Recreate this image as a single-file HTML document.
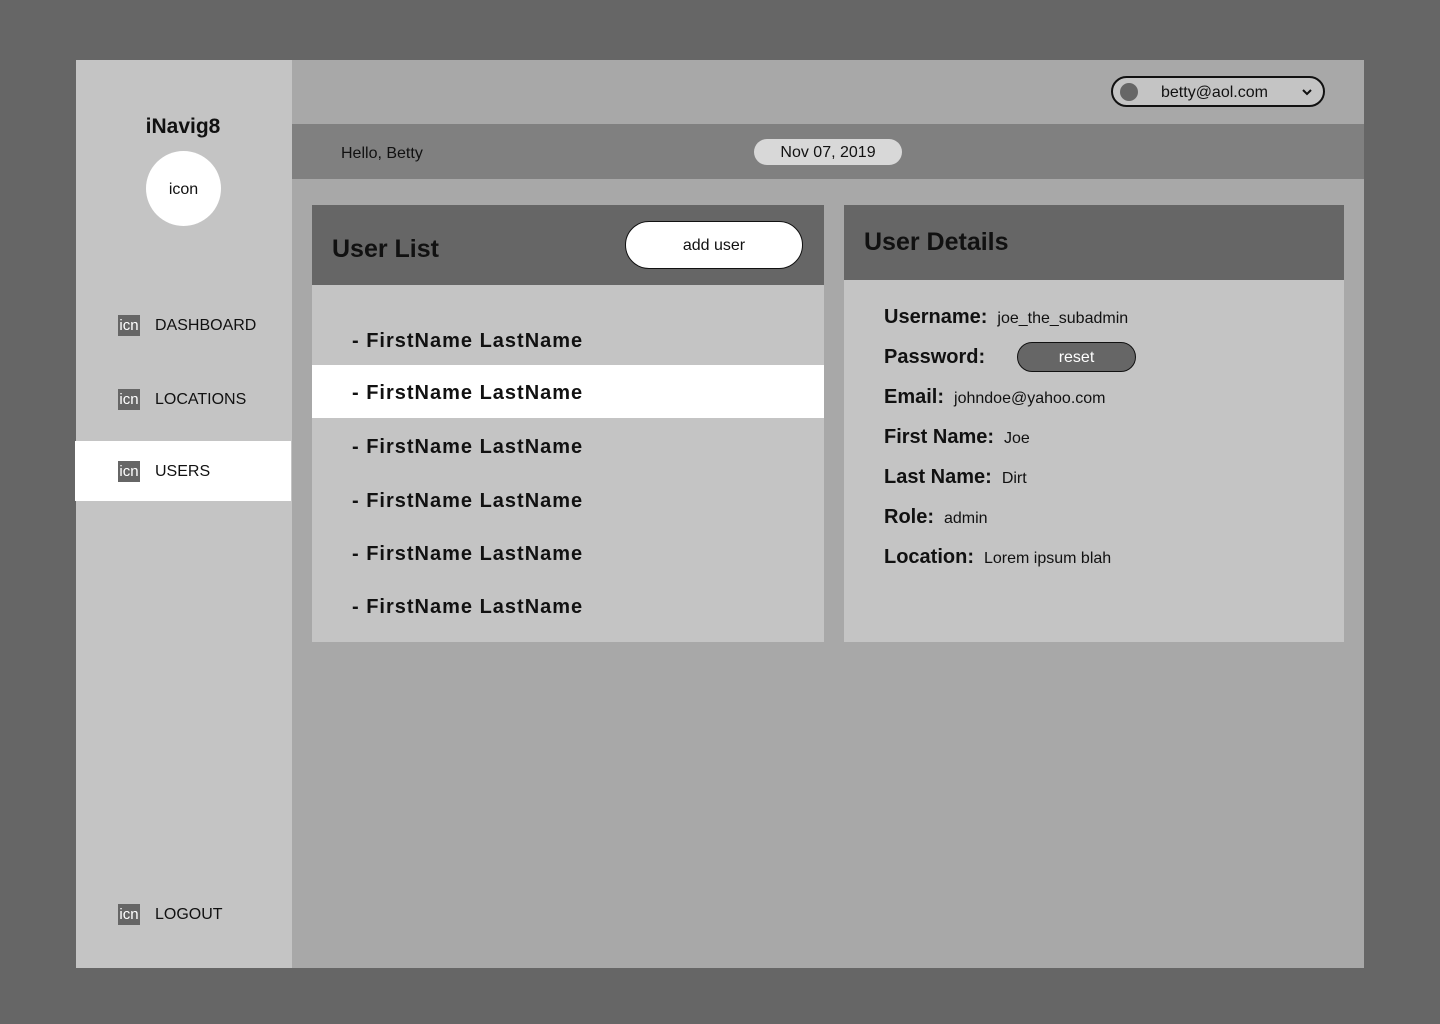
<!DOCTYPE html>
<html><head><meta charset="utf-8"><style>
*{margin:0;padding:0;box-sizing:border-box}
body{width:1440px;height:1024px;background:#666;font-family:"Liberation Sans",sans-serif;position:relative;overflow:hidden;color:#111}
.a{position:absolute}
.side{left:76px;top:60px;width:216px;height:908px;background:#c4c4c4}
.main{left:292px;top:60px;width:1072px;height:908px;background:#a8a8a8}
.b{font-weight:bold}
.nav{position:absolute;left:118px;font-size:16px;display:flex;align-items:center}
.nav .i{background:#666;color:#fff;width:22px;height:21px;font-size:15px;line-height:21px;text-align:center;margin-right:15px}
.row{position:absolute;left:312px;width:512px;height:53px;line-height:53px;padding-left:40px;font-weight:bold;font-size:20px;letter-spacing:1px}
.d{position:absolute;left:884px;font-size:20px;font-weight:bold;display:flex;align-items:baseline}
.d span{font-weight:normal;font-size:16px;margin-left:10px}
</style></head><body>
<div class="a side"></div>
<div class="a main"></div>
<div class="a b" style="left:76px;width:214px;top:115px;text-align:center;font-size:21px">iNavig8</div>
<div class="a" style="left:146px;top:151px;width:75px;height:75px;border-radius:50%;background:#fff;text-align:center;line-height:77px;font-size:16px">icon</div>
<div class="nav" style="top:315px"><div class="i">icn</div>DASHBOARD</div>
<div class="nav" style="top:389px"><div class="i">icn</div>LOCATIONS</div>
<div class="a" style="left:75px;top:441px;width:216px;height:60px;background:#fff"></div>
<div class="nav" style="top:461px"><div class="i">icn</div>USERS</div>
<div class="nav" style="top:904px"><div class="i">icn</div>LOGOUT</div>
<div class="a" style="left:1111px;top:76px;width:214px;height:31px;border:2px solid #111;border-radius:16px;background:#c4c4c4;font-size:16px;line-height:29px;padding-left:48px">betty@aol.com
<div class="a" style="left:7px;top:5px;width:18px;height:18px;border-radius:50%;background:#666"></div>
<svg class="a" style="left:188px;top:10px" width="12" height="8" viewBox="0 0 12 8"><path d="M2 2l4 4 4-4" fill="none" stroke="#111" stroke-width="2"/></svg></div>
<div class="a" style="left:292px;top:124px;width:1072px;height:55px;background:#808080"></div>
<div class="a" style="left:341px;top:145px;font-size:16px">Hello, Betty</div>
<div class="a" style="left:754px;top:139px;width:148px;height:26px;border-radius:13px;background:#d8d8d8;text-align:center;line-height:28px;font-size:16px">Nov 07, 2019</div>
<div class="a" style="left:312px;top:205px;width:512px;height:437px;background:#c4c4c4"></div>
<div class="a" style="left:312px;top:205px;width:512px;height:80px;background:#666"></div>
<div class="a b" style="left:332px;top:235px;font-size:25px">User List</div>
<div class="a" style="left:625px;top:221px;width:178px;height:48px;border:1px solid #111;border-radius:24px;background:#fff;text-align:center;line-height:48px;font-size:16px">add user</div>
<div class="row" style="top:315px">- FirstName LastName</div>
<div class="row" style="top:365px;background:#fff;line-height:56px">- FirstName LastName</div>
<div class="row" style="top:421px">- FirstName LastName</div>
<div class="row" style="top:475px">- FirstName LastName</div>
<div class="row" style="top:528px">- FirstName LastName</div>
<div class="row" style="top:581px">- FirstName LastName</div>
<div class="a" style="left:844px;top:205px;width:500px;height:437px;background:#c4c4c4"></div>
<div class="a" style="left:844px;top:205px;width:500px;height:75px;background:#666"></div>
<div class="a b" style="left:864px;top:228px;font-size:25px">User Details</div>
<div class="d" style="top:306px">Username:<span>joe_the_subadmin</span></div>
<div class="d" style="top:346px">Password:</div>
<div class="a" style="left:1017px;top:342px;width:119px;height:30px;border:1px solid #111;border-radius:15px;background:#666;color:#fff;text-align:center;line-height:30px;font-size:16px">reset</div>
<div class="d" style="top:386px">Email:<span>johndoe@yahoo.com</span></div>
<div class="d" style="top:426px">First Name:<span>Joe</span></div>
<div class="d" style="top:466px">Last Name:<span>Dirt</span></div>
<div class="d" style="top:506px">Role:<span>admin</span></div>
<div class="d" style="top:546px">Location:<span>Lorem ipsum blah</span></div>
</body></html>
